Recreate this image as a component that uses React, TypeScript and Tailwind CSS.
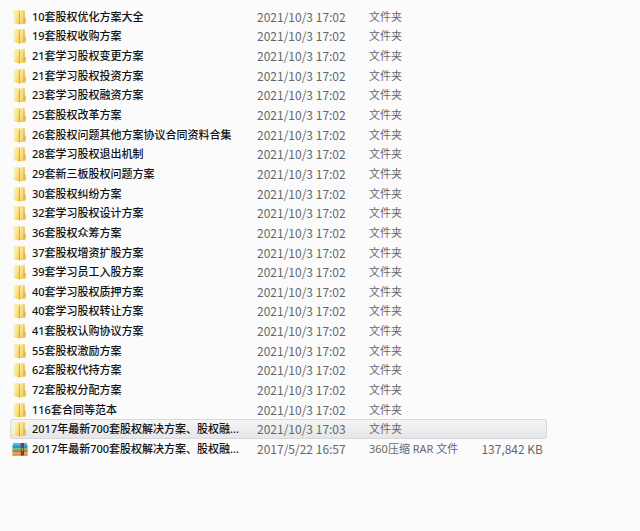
import clsx from "clsx";

type FileRow = {
    name: string;
    modified: string;
    type: string;
    size?: string;
    kind: "folder" | "archive";
    selected?: boolean;
};

const folderNames = [
    "10套股权优化方案大全",
    "19套股权收购方案",
    "21套学习股权变更方案",
    "21套学习股权投资方案",
    "23套学习股权融资方案",
    "25套股权改革方案",
    "26套股权问题其他方案协议合同资料合集",
    "28套学习股权退出机制",
    "29套新三板股权问题方案",
    "30套股权纠纷方案",
    "32套学习股权设计方案",
    "36套股权众筹方案",
    "37套股权增资扩股方案",
    "39套学习员工入股方案",
    "40套学习股权质押方案",
    "40套学习股权转让方案",
    "41套股权认购协议方案",
    "55套股权激励方案",
    "62套股权代持方案",
    "72套股权分配方案",
    "116套合同等范本",
];

const rows: FileRow[] = [
    ...folderNames.map((name): FileRow => ({
        name,
        modified: "2021/10/3 17:02",
        type: "文件夹",
        kind: "folder",
    })),
    {
        name: "2017年最新700套股权解决方案、股权融...",
        modified: "2021/10/3 17:03",
        type: "文件夹",
        kind: "folder",
        selected: true,
    },
    {
        name: "2017年最新700套股权解决方案、股权融...",
        modified: "2017/5/22 16:57",
        type: "360压缩 RAR 文件",
        size: "137,842 KB",
        kind: "archive",
    },
];

function FolderIcon() {
    return (
        <svg viewBox="0 0 16 16" className="h-4 w-4 shrink-0" aria-hidden="true">
            <defs>
                <linearGradient id="folderLeft" x1="0" y1="0" x2="1" y2="1">
                    <stop offset="0" stopColor="#fdf0b4" />
                    <stop offset="0.5" stopColor="#fce58e" />
                    <stop offset="1" stopColor="#f5cb48" />
                </linearGradient>
                <linearGradient id="folderRight" x1="0" y1="0" x2="0" y2="1">
                    <stop offset="0" stopColor="#f7e190" />
                    <stop offset="1" stopColor="#f0c64e" />
                </linearGradient>
            </defs>
            <path d="M6 1.6 12.4 1 12.8 8.6 13.8 9.4 13.4 14.4 6 15.2Z" fill="url(#folderRight)" />
            <path d="M11.6 1.2 12.4 1 12.8 8.6 13.8 9.4 13.4 14.4 11.4 14.6Z" fill="#e6b94a" />
            <path d="M8.4 3 9.4 2.8V13.8L8.4 14.2Z" fill="#fdf0b0" />
            <path d="M1.5 1.6 6.2.7 7.6 2.4V15.4L1.8 14Z" fill="url(#folderLeft)" />
            <path d="M7.5 2.4V15.2" stroke="#cfa137" strokeWidth="0.9" />
            <path d="M2.2 2.6 2.5 13" stroke="#fff8d8" strokeWidth="0.7" />
        </svg>
    );
}

function ArchiveIcon() {
    return (
        <svg viewBox="0 0 16 16" className="h-4 w-4 shrink-0" aria-hidden="true">
            <path d="M1.4 2H14.6L15.4 5H.6Z" fill="#55b4ea" />
            <path d="M.4 4.4H15.6V7.6H.4Z" fill="#2994d5" />
            <path d="M.4 7.6H15.6V10.6H.4Z" fill="#86ad48" />
            <path d="M.4 10H15.6V10.9H.4Z" fill="#5c8038" />
            <path d="M.4 10.9H15.6V14.4H.4Z" fill="#eda052" />
            <path d="M.4 13.6H15.6V14.5H.4Z" fill="#c4733e" />
            <path d="M8.8 2H12V14.5H8.8Z" fill="#70412c" />
            <path d="M9.6 6.8H11.2V9.8H9.6Z" fill="#c49a64" />
        </svg>
    );
}

function FileTableRow({ row }: { row: FileRow }) {
    const cell = clsx(
        "border-y p-0 align-middle leading-4 whitespace-nowrap",
        row.selected
            ? "border-[#d9d9db] bg-linear-to-b from-[#f5f5f6] to-[#e6e6e8]"
            : "border-transparent",
    );

    return (
        <tr aria-selected={row.selected}>
            <td className={clsx(cell, "rounded-l-[3px] border-l")}>
                <div className="flex items-center gap-1 pl-px text-[11px] leading-4 font-medium text-[#111111]">
                    {row.kind === "folder" ? <FolderIcon /> : <ArchiveIcon />}
                    <span>{row.name}</span>
                </div>
            </td>
            <td className={clsx(cell, "pl-px font-['Noto_Sans_CJK_SC',sans-serif] text-[12px]")}>
                {row.modified}
            </td>
            <td className={clsx(cell, "text-[11px]")}>{row.type}</td>
            <td
                className={clsx(
                    cell,
                    "rounded-r-[3px] border-r pr-[3px] text-right font-['Noto_Sans_CJK_SC',sans-serif] text-[12px]",
                )}
            >
                {row.size}
            </td>
        </tr>
    );
}

export default function App() {
    return (
        <main className="min-h-screen bg-[#fbfbfc] px-2.5 pt-[7px] font-['Noto_Sans','Noto_Sans_CJK_SC',sans-serif] text-[#66666c]">
            <table className="h-[452px] w-full max-w-[537px] table-fixed border-separate border-spacing-0">
                <colgroup>
                    <col className="w-[246px]" />
                    <col className="w-[113px]" />
                    <col />
                    <col className="w-[72px]" />
                </colgroup>
                <tbody>
                    {rows.map((row, i) => (
                        <FileTableRow key={i} row={row} />
                    ))}
                </tbody>
            </table>
        </main>
    );
}
